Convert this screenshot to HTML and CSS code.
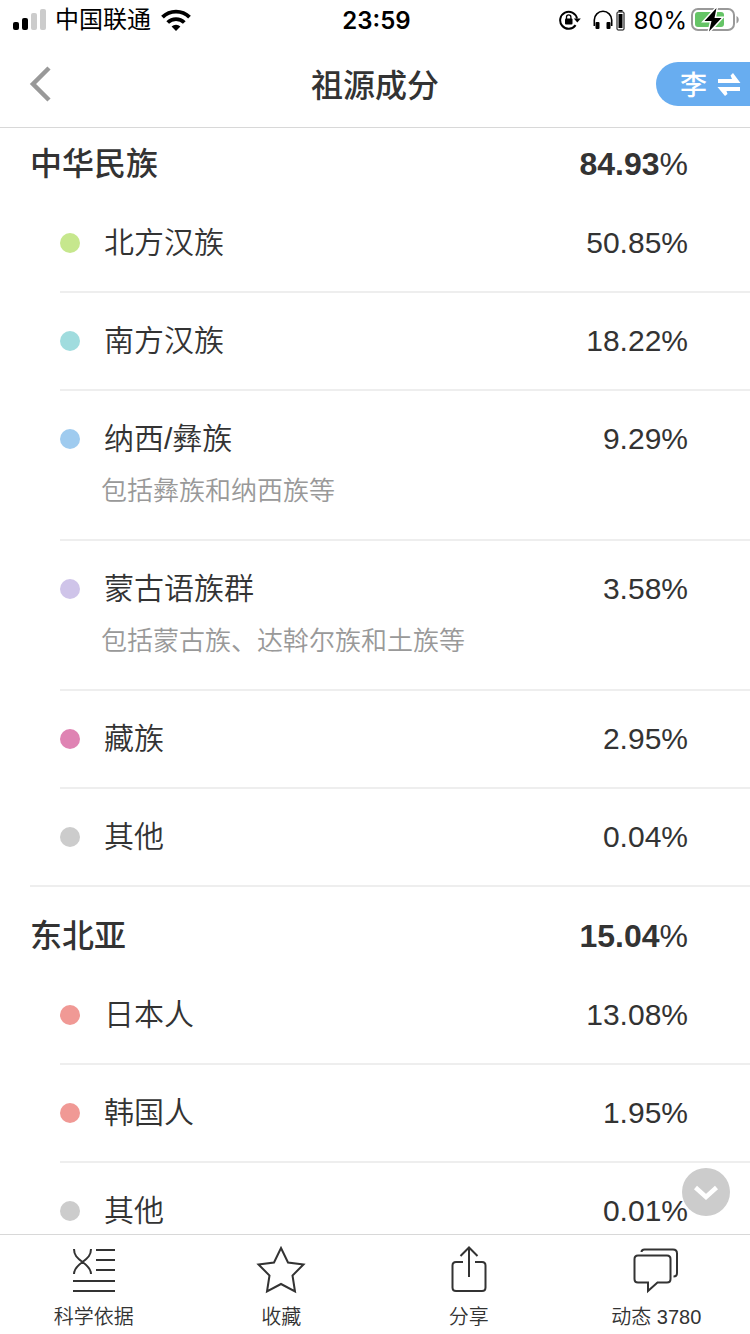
FILE: index.html
```html
<!DOCTYPE html>
<html lang="zh-CN">
<head>
  <meta charset="UTF-8" />
  <meta name="viewport" content="width=device-width, initial-scale=1">
  <title>祖源成分</title>
  <link rel="stylesheet" href="styles.css">
</head>
<body>

  <div class="status-bar">
    <div class="status-left">
      <svg class="signal" width="34" height="22" viewBox="0 0 34 22">
        <rect x="0" y="13" width="6" height="8" rx="2"/>
        <rect x="9" y="9" width="6" height="12" rx="2"/>
        <rect x="18" y="4" width="6" height="17" rx="2" fill="#ccc"/>
        <rect x="27" y="0" width="6" height="21" rx="2" fill="#ccc"/>
      </svg>
      <span class="carrier">中国联通</span>
      <svg class="wifi" width="30" height="22" viewBox="0 0 30 22">
        <path d="M15 22l-4.400-4.400a6.200 6.200 0 0 1 8.800 0z"/>
        <path d="M1.500 8.200a19 19 0 0 1 27 0M6.700 13.500a11.700 11.700 0 0 1 16.600 0" fill="none" stroke="#000" stroke-width="3.800"/>
      </svg>
    </div>
    <span class="time">23:59</span>
    <div class="status-right">
      <svg class="lock" width="22" height="20" viewBox="0 0 22 20">
        <path d="M16.600 15.200A8.500 8.500 0 1 1 18 8.500" fill="none" stroke="#000" stroke-width="2"/>
        <path d="M14.800 8.500h7L18.300 12.500z"/>
        <rect x="6" y="8.500" width="7.500" height="6" rx="1"/>
        <path d="M7.500 9V7a2.200 2.200 0 0 1 4.400 0v2" fill="none" stroke="#000" stroke-width="1.300"/>
      </svg>
      <svg class="headphones" width="33" height="22" viewBox="0 0 33 22">
        <path d="M1.300 17v-6a8.700 8.700 0 0 1 17.400 0v6" fill="none" stroke="#000" stroke-width="1.600"/>
        <rect x="2.500" y="13" width="4" height="7" rx="1"/>
        <rect x="13.500" y="13" width="4" height="7" rx="1"/>
        <rect x="24" y="3" width="7" height="18" rx="1" fill="none" stroke="#000"/>
        <rect x="25.500" y="5" width="4" height="14"/>
        <rect x="25.500" y="1" width="4" height="1.500"/>
      </svg>
      <span class="percent">80%</span>
      <svg class="battery" width="49" height="24" viewBox="0 0 49 24">
        <rect x="1" y="1" width="42" height="21" rx="6" fill="none" stroke="#999" stroke-width="2"/>
        <rect x="4" y="4" width="29" height="15" rx="3" fill="#65c466"/>
        <path d="M45.500 8c3 1.500 3 6 0 7.500z" fill="#999"/>
        <path d="M25.500 0L13.500 13h7L18 23.500 30.500 10h-7z" stroke="#fff" stroke-width="3" paint-order="stroke"/>
      </svg>
    </div>
  </div>

  <header class="nav">
    <button class="back" aria-label="返回">
      <svg width="22" height="36" viewBox="0 0 22 36">
        <path d="M20 2L4 18l16 16" fill="none" stroke="#999" stroke-width="4.500"/>
      </svg>
    </button>
    <h1>祖源成分</h1>
    <button class="switch">
      李
      <svg width="24" height="24" viewBox="0 0 24 24">
        <path d="M1 7h14l-1.500-3.500L16 1l7.500 10H1zM23 15H.500L8 24l2.500-2L9.500 19H23z" fill="#fff"/>
      </svg>
    </button>
  </header>

  <main class="content">
    <div class="list">
      <section class="group">
        <div class="group-title">
          <h2>中华民族</h2>
          <span class="total">84.93<span class="unit">%</span></span>
        </div>
        <ul>
          <li>
            <i class="dot green"></i>
            <span class="name">北方汉族</span>
            <span class="value">50.85%</span>
          </li>
          <li>
            <i class="dot teal"></i>
            <span class="name">南方汉族</span>
            <span class="value">18.22%</span>
          </li>
          <li>
            <i class="dot blue"></i>
            <span class="name">纳西/彝族</span>
            <span class="value">9.29%</span>
            <p class="note">包括彝族和纳西族等</p>
          </li>
          <li>
            <i class="dot purple"></i>
            <span class="name">蒙古语族群</span>
            <span class="value">3.58%</span>
            <p class="note">包括蒙古族、达斡尔族和土族等</p>
          </li>
          <li>
            <i class="dot pink"></i>
            <span class="name">藏族</span>
            <span class="value">2.95%</span>
          </li>
          <li>
            <i class="dot gray"></i>
            <span class="name">其他</span>
            <span class="value">0.04%</span>
          </li>
        </ul>
      </section>

      <section class="group">
        <div class="group-title">
          <h2>东北亚</h2>
          <span class="total">15.04<span class="unit">%</span></span>
        </div>
        <ul>
          <li>
            <i class="dot red"></i>
            <span class="name">日本人</span>
            <span class="value">13.08%</span>
          </li>
          <li>
            <i class="dot red"></i>
            <span class="name">韩国人</span>
            <span class="value">1.95%</span>
          </li>
          <li>
            <i class="dot gray"></i>
            <span class="name">其他</span>
            <span class="value">0.01%</span>
          </li>
        </ul>
      </section>
    </div>

    <button class="scroll-down" aria-label="向下">
      <svg width="26" height="16" viewBox="0 0 26 16">
        <path d="M2.500 3.500L13 13 23.500 3.500" fill="none" stroke="#fff" stroke-width="4.500"/>
      </svg>
    </button>
  </main>

  <nav class="tab-bar">
    <button>
      <svg width="50" height="50" viewBox="0 0 50 50">
        <path d="M5 4c0 6 3 9 8.500 13S22 24 22 29M22 4c0 6-3 9-8.500 13S5 24 5 29M27 5h19M27 15h19M27 25h19M4 36h42M4 46h42"/>
      </svg>
      科学依据
    </button>
    <button>
      <svg width="50" height="50" viewBox="0 0 50 50">
        <path d="M25 3l7 14.500 15.500 2-11 11L39 46.500 25 39l-14 7.500 2.500-16-11-11 15.500-2z"/>
      </svg>
      收藏
    </button>
    <button>
      <svg width="50" height="50" viewBox="0 0 50 50">
        <path d="M19 17h-7q-3.500 0-3.500 3.500v22q0 3.500 3.500 3.500h26q3.500 0 3.500-3.500v-22Q41.500 17 38 17h-7M25 32V3M16.500 11L25 2.500l8.500 8.500"/>
      </svg>
      分享
    </button>
    <button>
      <svg width="50" height="50" viewBox="0 0 50 50">
        <path d="M7 10.500h29q3.500 0 3.500 3.500v20q0 3.500-3.500 3.500H26.500L17 46v-8.500H7Q3.500 37.500 3.500 34V14q0-3.500 3.500-3.500zM10.500 7q0-2.500 3-2.500H42q4 0 4 4V28q0 3.500-3.500 3.500"/>
      </svg>
      动态 3780
    </button>
  </nav>

</body>
</html>
```
FILE: styles.css
```css
* {
  box-sizing: border-box;
  margin: 0;
  padding: 0;
}

body {
  display: flex;
  flex-direction: column;
  height: 100vh;
  background: #fff;
  color: #333;
  font-family: 'Liberation Sans', 'Noto Sans CJK SC', sans-serif;
}

button {
  background: none;
  border: none;
  color: inherit;
  font-family: inherit;
  cursor: pointer;
}

svg {
  display: block;
  flex-shrink: 0;
}

/* Status bar */
.status-bar {
  display: grid;
  grid-template-columns: 1fr auto 1fr;
  align-items: center;
  height: 40px;
  padding: 0 10px 0 13px;
  color: #000;
  font-family: 'Inter', 'Noto Sans CJK SC', sans-serif;
  font-size: 24px;
}

.status-left,
.status-right {
  display: flex;
  align-items: center;
}

.status-left {
  line-height: 36px;
}

.status-right {
  justify-content: flex-end;
}

.carrier {
  margin: 0 10px 0 8px;
}

.time {
  font-weight: 600;
}

.lock {
  margin-right: 12px;
}

.percent {
  margin: 0 4px 0 7px;
}

/* Header */
.nav {
  display: grid;
  grid-template-columns: 1fr auto 1fr;
  align-items: center;
  height: 88px;
  border-bottom: 1px solid #d8d8d8;
}

.nav h1 {
  padding-bottom: 2px;
  font-size: 32px;
  font-weight: 500;
}

.back {
  justify-self: start;
  padding: 10px 29px;
}

.switch {
  display: flex;
  justify-self: end;
  align-items: center;
  gap: 10px;
  height: 44px;
  padding: 0 9px 0 24px;
  background: #68adf0;
  border-radius: 22px 0 0 22px;
  color: #fff;
  font-size: 27px;
  font-weight: 500;
}

/* List */
.content {
  position: relative;
  flex: 1;
  min-height: 0;
}

.list {
  height: 100%;
  overflow-y: auto;
  scrollbar-width: none;
}

.group {
  padding: 29px 0 0 30px;
}

.group:first-child {
  padding-top: 16px;
}

.group-title {
  display: flex;
  justify-content: space-between;
  height: 51px;
  padding-right: 62px;
  line-height: 40px;
}

.group-title h2 {
  font-size: 32px;
  font-weight: 500;
}

.total {
  font-size: 32px;
  font-weight: bold;
}

.unit {
  font-weight: normal;
}

.group ul {
  list-style: none;
}

.group li {
  display: grid;
  grid-template-columns: 20px 1fr auto;
  column-gap: 24px;
  align-items: center;
  margin-left: 30px;
  padding: 26px 62px 26px 0;
  border-bottom: 2px solid #eee;
  line-height: 44px;
}

.group li:last-child {
  margin-left: 0;
  padding-left: 30px;
}

.dot {
  width: 20px;
  height: 20px;
  border-radius: 50%;
}

.green { background: #c6e78d; }
.teal { background: #a0dcde; }
.blue { background: #9fcbef; }
.purple { background: #cfc4e9; }
.pink { background: #df83b3; }
.red { background: #f09995; }
.gray { background: #ccc; }

.name {
  font-size: 30px;
  font-weight: 350;
}

.value {
  font-size: 30px;
}

.note {
  grid-column: 1 / -1;
  margin-left: 41px;
  padding-top: 8px;
  color: #999;
  font-size: 26px;
  font-weight: 350;
}

.scroll-down {
  display: flex;
  justify-content: center;
  align-items: center;
  position: absolute;
  right: 20px;
  bottom: 18px;
  width: 48px;
  height: 48px;
  background: #ccc;
  border-radius: 50%;
}

/* Bottom tabs */
.tab-bar {
  display: grid;
  grid-template-columns: repeat(4, 1fr);
  height: 100px;
  border-top: 1px solid #d8d8d8;
}

.tab-bar button {
  display: flex;
  flex-direction: column;
  align-items: center;
  gap: 10px;
  padding-top: 10px;
  font-size: 20px;
  font-weight: 350;
  line-height: 24px;
}

.tab-bar svg {
  fill: none;
  stroke: #333;
  stroke-width: 2;
}
```
